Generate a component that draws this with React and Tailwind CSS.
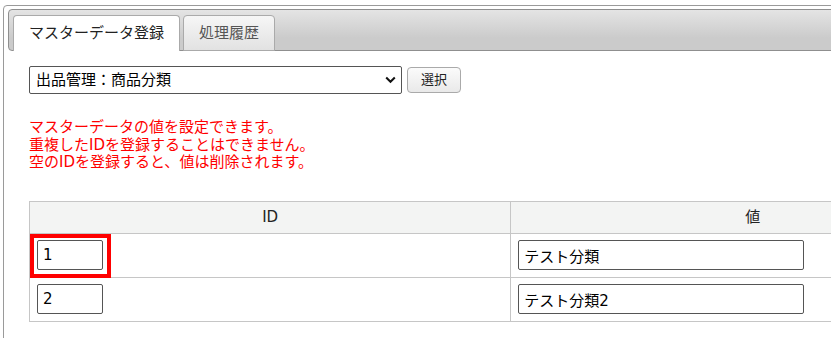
import React from "react";

const font = { fontFamily: '"DejaVu Sans", "Noto Sans CJK JP", sans-serif' };

export default function App() {
  return (
    <div
      className="w-[831px] h-[338px] overflow-hidden bg-white text-[#222]"
      style={font}
    >
      <div className="ml-[3px] mt-[5px] w-[1100px] h-[400px] border border-[#9a9a9a] rounded-t-[4px] pt-[3px] px-[4px]">
        {/* tab header */}
        <div className="h-[42px] border border-[#8f8f8f] rounded-[4px] bg-[linear-gradient(to_bottom,#e4e4e4,#cbcbcb_70%)] flex items-end pl-[4px] gap-[3px]">
          <div className="-mb-px h-[36px] px-[15px] flex items-center bg-white border border-b-0 border-[#aaaaaa] rounded-t-[4px] text-[15px] text-[#222]">
            マスターデータ登録
          </div>
          <div className="-mb-px h-[36px] px-[15px] flex items-center bg-[linear-gradient(to_bottom,#f6f6f6,#e2e2e2)] border border-[#aaaaaa] rounded-t-[4px] text-[15px] text-[#555]">
            処理履歴
          </div>
        </div>

        {/* panel */}
        <div className="pl-[21px] pt-[15px]">
          <div className="flex items-center gap-[5px]">
            <div className="relative w-[373px] h-[28px]">
              <select
                className="appearance-none w-full h-full border border-[#555] rounded-[2px] bg-white pl-[6px] text-[15px] text-black outline-none"
                style={font}
                defaultValue="a"
              >
                <option value="a">出品管理：商品分類</option>
              </select>
              <svg
                className="absolute right-[6px] top-[10px] pointer-events-none"
                width="11"
                height="8"
                viewBox="0 0 11 8"
              >
                <path d="M1.2 1.5 L5.5 5.8 L9.8 1.5" fill="none" stroke="#111" strokeWidth="2" />
              </svg>
            </div>
            <button
              className="w-[54px] h-[26px] border border-[#aaaaaa] rounded-[4px] bg-[linear-gradient(to_bottom,#fbfbfb,#e9e9e9)] text-[13px] text-[#222]"
              style={font}
            >
              選択
            </button>
          </div>

          <div className="mt-[25px] text-[15px] leading-[17.5px] text-[#ff0000]">
            <div>マスターデータの値を設定できます。</div>
            <div>重複したIDを登録することはできません。</div>
            <div>空のIDを登録すると、値は削除されます。</div>
          </div>

          <table className="mt-[29px] w-[966px] border-collapse text-[15px]">
            <thead>
              <tr className="h-[32px] bg-[#f3f4f3]">
                <th className="w-[482px] border border-[#c6c6c6] font-normal text-[#222]">ID</th>
                <th className="w-[484px] border border-[#c6c6c6] font-normal text-[#222]">値</th>
              </tr>
            </thead>
            <tbody>
              {[
                ["1", "テスト分類", true],
                ["2", "テスト分類2", false],
              ].map(([id, val, hl]) => (
                <tr key={id} className="h-[44px]">
                  <td className="relative border border-[#c6c6c6] pl-[7px] align-middle">
                    {hl && (
                      <div className="absolute left-0 top-0 w-[81px] h-[44px] border-4 border-[#ff0000] pointer-events-none" />
                    )}
                    <input
                      className="relative block w-[66px] h-[30px] border border-[#555] rounded-[2px] px-[5px] text-[15px] text-black outline-none"
                      style={font}
                      defaultValue={id}
                    />
                  </td>
                  <td className="border border-[#c6c6c6] pl-[7px] align-middle">
                    <input
                      className="block w-[286px] h-[30px] border border-[#555] rounded-[2px] px-[5px] text-[15px] text-black outline-none"
                      style={font}
                      defaultValue={val}
                    />
                  </td>
                </tr>
              ))}
            </tbody>
          </table>
        </div>
      </div>
    </div>
  );
}
